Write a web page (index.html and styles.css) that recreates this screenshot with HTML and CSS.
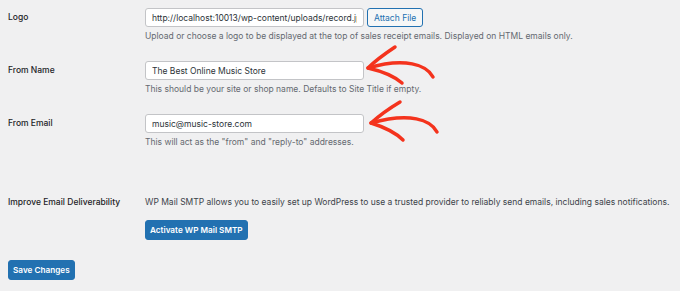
FILE: index.html
```html
<!DOCTYPE html>
<html lang="en">
<head>
    <meta charset="UTF-8">
    <meta name="viewport" content="width=device-width, initial-scale=1.0">
    <title>Email Settings</title>
    <link rel="stylesheet" href="styles.css">
</head>
<body>

    <form class="settings">
        <div class="row">
            <div class="label">Logo</div>
            <div class="field">
                <div class="inline">
                    <input type="text" class="text-input" value="http://localhost:10013/wp-content/uploads/record.jpg">
                    <button type="button" class="button-secondary">Attach File</button>
                </div>
                <p class="description">Upload or choose a logo to be displayed at the top of sales receipt emails. Displayed on HTML emails only.</p>
            </div>
        </div>

        <div class="row">
            <div class="label">From Name</div>
            <div class="field">
                <input type="text" class="text-input" value="The Best Online Music Store">
                <p class="description">This should be your site or shop name. Defaults to Site Title if empty.</p>
            </div>
        </div>

        <div class="row">
            <div class="label">From Email</div>
            <div class="field">
                <input type="text" class="text-input" value="music@music-store.com">
                <p class="description">This will act as the "from" and "reply-to" addresses.</p>
            </div>
        </div>

        <div class="row row-smtp">
            <div class="label">Improve Email Deliverability</div>
            <div class="field">
                <p class="plain">WP Mail SMTP allows you to easily set up WordPress to use a trusted provider to reliably send emails, including sales notifications.</p>
                <button type="button" class="button-primary">Activate WP Mail SMTP</button>
            </div>
        </div>

        <div class="submit">
            <button type="button" class="button-primary">Save Changes</button>
        </div>
    </form>

    <!-- hand drawn arrows over the inputs -->
    <svg class="arrows" width="680" height="291" viewBox="0 0 680 291">
        <g fill="none" stroke="#f4331d" stroke-width="3.5" stroke-linecap="round" stroke-linejoin="round">
            <path d="M433 77 C 427 65, 405 57, 368 68"/>
            <path d="M395 47 C 386 53, 376 60, 368 68 C 381 71, 394 76, 402 83"/>
            <path d="M437 132 C 431 120, 410 112, 371 123"/>
            <path d="M400 102 C 390 108, 380 115, 371 123 C 384 127, 396 133, 403 140"/>
        </g>
    </svg>

</body>
</html>
```

FILE: styles.css
```css
body {
    font-family: Inter, "Noto Sans", Arial, sans-serif;
    font-size: 8.5px;
    color: #1d2327;
    margin: 0;
    padding: 0 8px;
    background-color: #f0f0f1;
    position: relative;
}

.row {
    display: grid;
    grid-template-columns: 137px 1fr;
    padding: 8px 0 10px;
}

.label {
    font-weight: 500;
    line-height: 19px;
}

.field p {
    margin: 0;
    white-space: nowrap;
}

.inline {
    display: flex;
    gap: 3px;
}

.text-input {
    box-sizing: border-box;
    width: 219px;
    height: 19px;
    padding: 0 6px;
    border: 1px solid #c3c4c7;
    border-radius: 3px;
    background: #fff;
    font-family: inherit;
    font-size: 8.5px;
    color: #2c3338;
    display: block;
}

.description {
    color: #646970;
    line-height: 13px;
    margin-top: 3px !important;
}

.button-secondary {
    box-sizing: border-box;
    height: 19px;
    padding: 0 6px;
    border: 1px solid #2271b1;
    border-radius: 3px;
    background: #f6f7f7;
    color: #2271b1;
    font-family: inherit;
    font-size: 8.5px;
}

.row-smtp {
    padding-top: 37px;
}

.row-smtp .label {
    line-height: 13px;
}

.plain {
    color: #3c434a;
    line-height: 13px;
}

.button-primary {
    box-sizing: border-box;
    height: 20px;
    padding: 0 4px;
    border: 1px solid #2271b1;
    border-radius: 3px;
    background: #2271b1;
    color: #fff;
    font-family: inherit;
    font-size: 8.2px;
    font-weight: 600;
}

.row-smtp .button-primary {
    margin-top: 11px;
}

.submit {
    padding-top: 10px;
}

.arrows {
    position: absolute;
    top: 0;
    left: 0;
}
```
